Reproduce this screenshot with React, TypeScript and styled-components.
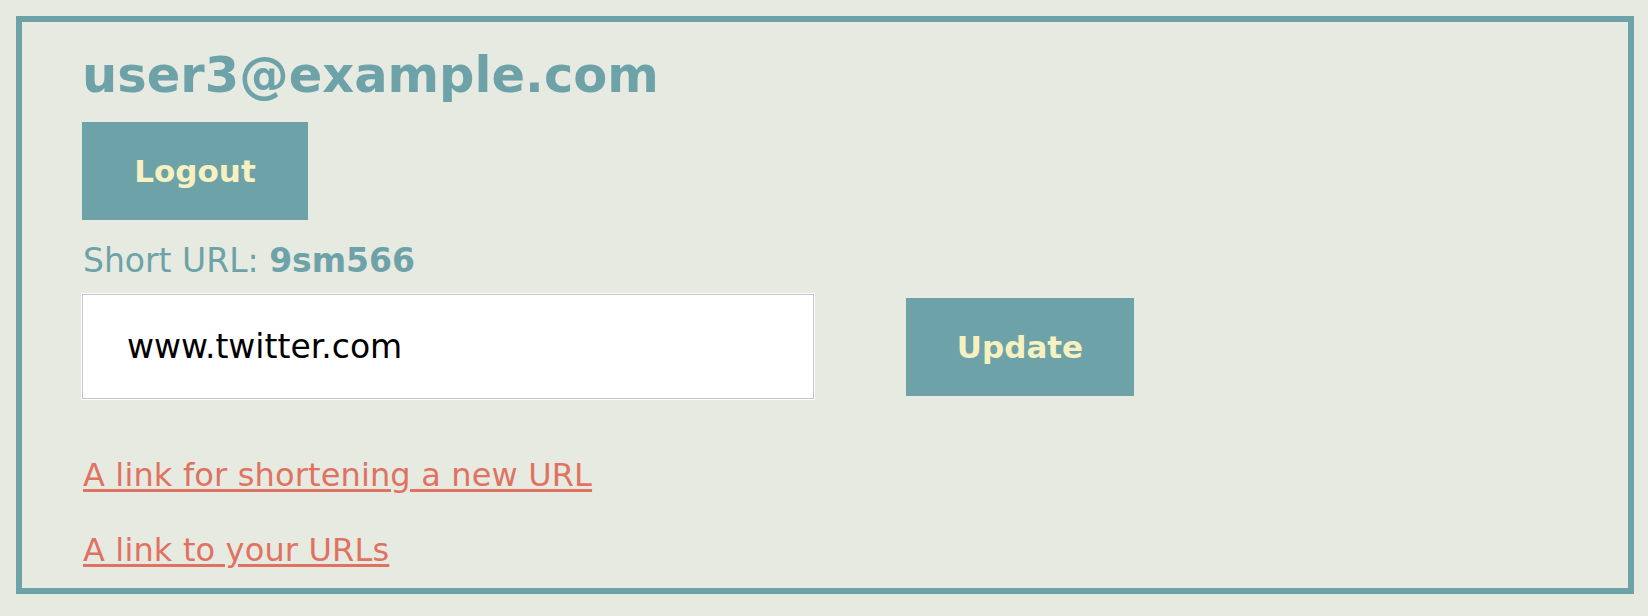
import styled, { createGlobalStyle } from "styled-components";

const teal = "#6da3a8";
const cream = "#f7f1c1";
const paper = "#e7eae1";
const coral = "#e07262";

const GlobalStyle = createGlobalStyle`
  html, body {
    margin: 0;
    padding: 0;
    background-color: ${paper};
  }
  body {
    font-family: Verdana, "DejaVu Sans", sans-serif;
  }
`;

const Page = styled.div`
  padding: 16px 14px 22px 16px;
`;

const Panel = styled.main`
  border: 6px solid ${teal};
  padding: 24px 60px 19px 60px;
  display: flex;
  flex-direction: column;
  align-items: flex-start;
`;

const Email = styled.h1`
  margin: 0 0 18px 0;
  font-size: 49.5px;
  line-height: 58px;
  font-weight: bold;
  color: ${teal};
`;

const Button = styled.button<{ $width: number }>`
  width: ${(p) => p.$width}px;
  height: 98px;
  border: none;
  margin: 0;
  background-color: ${teal};
  color: ${cream};
  font-family: Verdana, "DejaVu Sans", sans-serif;
  font-size: 31px;
  font-weight: bold;
  cursor: pointer;
`;

const ShortLabel = styled.p`
  margin: 22px 0 15px 1px;
  font-size: 33px;
  line-height: 37px;
  color: ${teal};
  b {
    font-weight: bold;
  }
`;

const EditRow = styled.form`
  display: flex;
  align-items: center;
  gap: 92px;
  margin: 0;
`;

const UrlInput = styled.input`
  box-sizing: border-box;
  width: 732px;
  height: 105px;
  padding: 0 44px;
  border: 1px solid #c6c6c6;
  box-shadow: 0 0 0 1px #ffffff;
  background: #ffffff;
  color: #000000;
  font-family: Verdana, "DejaVu Sans", sans-serif;
  font-size: 33px;
  outline: none;
`;

const Links = styled.nav`
  display: flex;
  flex-direction: column;
  gap: 38px;
  margin-top: 58px;
  padding-left: 1px;
`;

const TextLink = styled.a`
  font-size: 32px;
  line-height: 37px;
  letter-spacing: 0.15px;
  color: ${coral};
  text-decoration: underline;
  text-underline-offset: 3px;
`;

export default function App() {
  return (
    <>
      <GlobalStyle />
      <Page>
        <Panel>
          <Email>user3@example.com</Email>
          <Button $width={226}>Logout</Button>
          <ShortLabel>
            Short URL: <b>9sm566</b>
          </ShortLabel>
          <EditRow onSubmit={(e) => e.preventDefault()}>
            <UrlInput type="text" defaultValue="www.twitter.com" />
            <Button $width={228} type="submit">
              Update
            </Button>
          </EditRow>
          <Links>
            <TextLink href="#">A link for shortening a new URL</TextLink>
            <TextLink href="#">A link to your URLs</TextLink>
          </Links>
        </Panel>
      </Page>
    </>
  );
}
